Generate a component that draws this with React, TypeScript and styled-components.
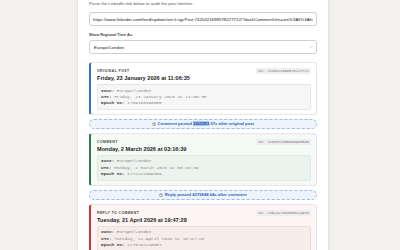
import styled, { createGlobalStyle } from "styled-components";

const GlobalStyle = createGlobalStyle`
  html, body {
    margin: 0;
    padding: 0;
    background: #f2f1ee;
    height: 250px;
    overflow: hidden;
    font-family: "Liberation Sans", Arial, sans-serif;
  }
`;

const Page = styled.div`
  padding-left: 6px;
`;

const Panel = styled.div`
  width: 252px;
  margin: 0 auto;
  min-height: 260px;
  box-sizing: border-box;
  background: #ffffff;
  border-left: 1px solid #e6e4df;
  border-right: 1px solid #e6e4df;
  box-shadow: 0 0 3px rgba(0, 0, 0, 0.05);
  padding: 1px 11px 0 11px;
`;

const Hint = styled.div`
  font-size: 4.3px;
  line-height: 6px;
  color: #555;
`;

const UrlInput = styled.input`
  display: block;
  width: 100%;
  box-sizing: border-box;
  height: 14px;
  margin-top: 5px;
  padding: 0 3px;
  border: 1px solid #cfcfcf;
  border-radius: 3px;
  font-family: "Liberation Sans", Arial, sans-serif;
  font-size: 4.4px;
  color: #222;
  background: #fff;
  outline: none;
`;

const FieldLabel = styled.div`
  margin-top: 6px;
  font-size: 3.8px;
  line-height: 6px;
  font-weight: 700;
  color: #444;
`;

const SelectBox = styled.div`
  margin-top: 2px;
  height: 14px;
  box-sizing: border-box;
  border: 1px solid #cfcfcf;
  border-radius: 3px;
  padding: 0 3px 0 4px;
  display: flex;
  align-items: center;
  justify-content: space-between;
  font-size: 4.4px;
  color: #222;
  background: #fff;
`;

const Timeline = styled.div`
  margin-top: 8px;
  display: flex;
  flex-direction: column;
  gap: 4px;
`;

const tones = {
  blue: { edge: "#2f6fd0", bg: "#ffffff", box: "#f6f6f6", boxBorder: "#e6e6e6" },
  green: { edge: "#2c7a47", bg: "#f4faf6", box: "#ecf3ee", boxBorder: "#dfe9e2" },
  red: { edge: "#d2322d", bg: "#fdf5f4", box: "#f6ecea", boxBorder: "#eddcd9" },
};

type Tone = keyof typeof tones;

const Card = styled.div<{ $tone: Tone }>`
  box-sizing: border-box;
  border: 1px solid #e6e6e6;
  border-left: 2px solid ${({ $tone }) => tones[$tone].edge};
  border-radius: 3px;
  background: ${({ $tone }) => tones[$tone].bg};
  padding: 5px 5px 4px 6px;
`;

const CardHead = styled.div`
  display: flex;
  align-items: center;
  justify-content: space-between;
  height: 6px;
`;

const Kind = styled.div`
  font-size: 3.4px;
  font-weight: 700;
  letter-spacing: 0.45px;
  color: #444;
  text-transform: uppercase;
`;

const IdBadge = styled.div`
  font-family: "Liberation Mono", "Courier New", monospace;
  font-size: 3.7px;
  line-height: 6px;
  padding: 0 2px;
  border-radius: 1.5px;
  background: #eeeeee;
  color: #777;
`;

const When = styled.div`
  font-size: 5.6px;
  line-height: 9px;
  font-weight: 700;
  color: #1d1d1d;
`;

const Details = styled.div<{ $tone: Tone }>`
  margin-top: 1px;
  box-sizing: border-box;
  padding: 2.5px 3px;
  border: 1px solid ${({ $tone }) => tones[$tone].boxBorder};
  border-radius: 2px;
  background: ${({ $tone }) => tones[$tone].box};
  font-family: "Liberation Mono", "Courier New", monospace;
  font-size: 4.4px;
  line-height: 6.3px;
  color: #888;
`;

const Key = styled.b`
  color: #444;
`;

const Gap = styled.div`
  box-sizing: border-box;
  height: 10px;
  border: 1px dashed #9dbbe6;
  border-radius: 6px;
  background: #eef4fc;
  display: flex;
  align-items: center;
  justify-content: center;
  gap: 1.5px;
  font-size: 4.2px;
  font-weight: 700;
  color: #2c62b8;
`;

const Selected = styled.span`
  background: #a9c8f5;
  color: #1f4f9c;
`;

const Clock = () => (
  <svg width="4" height="4" viewBox="0 0 10 10" fill="none" stroke="#666" strokeWidth="1.2">
    <circle cx="5" cy="5.5" r="3.8" />
    <path d="M5 3.5V5.7L6.4 6.6M4 0.8h2" />
  </svg>
);

const Chevron = () => (
  <svg width="4" height="4" viewBox="0 0 10 10" fill="none" stroke="#888" strokeWidth="1.2">
    <path d="M2.5 4l2.5 2.5L7.5 4" />
  </svg>
);

const posts = [
  {
    tone: "blue" as Tone,
    kind: "Original Post",
    id: "7420421698578227712",
    when: "Friday, 23 January 2026 at 11:06:35",
    utc: "Friday, 23 January 2026 at 11:06:35",
    epoch: "1769166395000",
  },
  {
    tone: "green" as Tone,
    kind: "Comment",
    id: "7434071336985968536",
    when: "Monday, 2 March 2026 at 03:16:39",
    utc: "Monday, 2 March 2026 at 03:16:39",
    epoch: "1772421399369",
  },
  {
    tone: "red" as Tone,
    kind: "Reply to Comment",
    id: "7452417884585214976",
    when: "Tuesday, 21 April 2026 at 19:47:28",
    utc: "Tuesday, 21 April 2026 at 18:47:28",
    epoch: "1776797248007",
  },
];

const PostCard = ({ post }: { post: (typeof posts)[number] }) => (
  <Card $tone={post.tone}>
    <CardHead>
      <Kind>{post.kind}</Kind>
      <IdBadge>ID: {post.id}</IdBadge>
    </CardHead>
    <When>{post.when}</When>
    <Details $tone={post.tone}>
      <div>
        <Key>Zone:</Key> Europe/London
      </div>
      <div>
        <Key>UTC:</Key> {post.utc}
      </div>
      <div>
        <Key>Epoch MS:</Key> {post.epoch}
      </div>
    </Details>
  </Card>
);

export default function App() {
  return (
    <>
      <GlobalStyle />
      <Page>
        <Panel>
          <Hint>Paste the LinkedIn link below to audit the post timeline.</Hint>
          <UrlInput
            readOnly
            value="https://www.linkedin.com/feed/update/urn:li:ugcPost:7420421698578227712/?dashCommentUrn=urn%3Ali%3Afsd_comment"
          />
          <FieldLabel>Show Regional Time As:</FieldLabel>
          <SelectBox>
            <span>Europe/London</span>
            <Chevron />
          </SelectBox>
          <Timeline>
            <PostCard post={posts[0]} />
            <Gap>
              <Clock />
              <span>
                Comment posted <Selected>3265993</Selected>.57s after original post
              </span>
            </Gap>
            <PostCard post={posts[1]} />
            <Gap>
              <Clock />
              <span>Reply posted 4376848.64s after comment</span>
            </Gap>
            <PostCard post={posts[2]} />
          </Timeline>
        </Panel>
      </Page>
    </>
  );
}
